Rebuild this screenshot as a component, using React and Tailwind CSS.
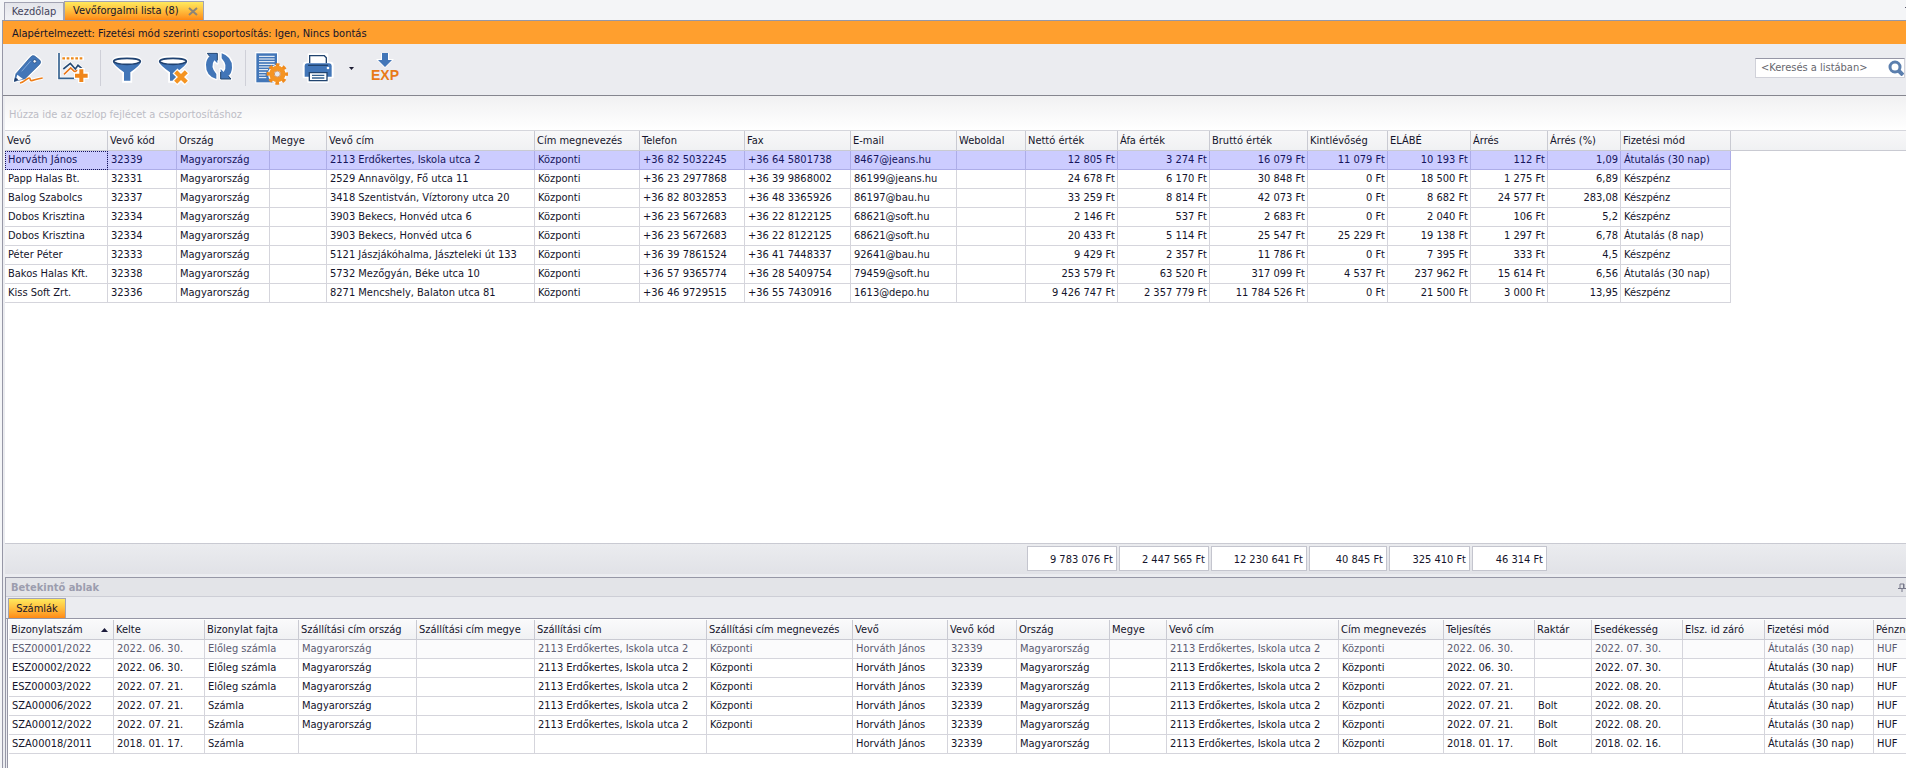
import { useState } from 'react';
import { clsx } from 'clsx';

const customerColumns = [
  { label: 'Vevő', width: 103 },
  { label: 'Vevő kód', width: 69 },
  { label: 'Ország', width: 93 },
  { label: 'Megye', width: 57 },
  { label: 'Vevő cím', width: 208 },
  { label: 'Cím megnevezés', width: 105 },
  { label: 'Telefon', width: 105 },
  { label: 'Fax', width: 106 },
  { label: 'E-mail', width: 106 },
  { label: 'Weboldal', width: 69 },
  { label: 'Nettó érték', width: 92, right: true, total: '9 783 076 Ft' },
  { label: 'Áfa érték', width: 92, right: true, total: '2 447 565 Ft' },
  { label: 'Bruttó érték', width: 98, right: true, total: '12 230 641 Ft' },
  { label: 'Kintlévőség', width: 80, right: true, total: '40 845 Ft' },
  { label: 'ELÁBÉ', width: 83, right: true, total: '325 410 Ft' },
  { label: 'Árrés', width: 77, right: true, total: '46 314 Ft' },
  { label: 'Árrés (%)', width: 73, right: true },
  { label: 'Fizetési mód', width: 110 },
];

const customers = [
  ['Horváth János', '32339', 'Magyarország', '', '2113 Erdőkertes, Iskola utca 2', 'Központi', '+36 82 5032245', '+36 64 5801738', '8467@jeans.hu', '', '12 805 Ft', '3 274 Ft', '16 079 Ft', '11 079 Ft', '10 193 Ft', '112 Ft', '1,09', 'Átutalás (30 nap)'],
  ['Papp Halas Bt.', '32331', 'Magyarország', '', '2529 Annavölgy, Fő utca 11', 'Központi', '+36 23 2977868', '+36 39 9868002', '86199@jeans.hu', '', '24 678 Ft', '6 170 Ft', '30 848 Ft', '0 Ft', '18 500 Ft', '1 275 Ft', '6,89', 'Készpénz'],
  ['Balog Szabolcs', '32337', 'Magyarország', '', '3418 Szentistván, Víztorony utca 20', 'Központi', '+36 82 8032853', '+36 48 3365926', '86197@bau.hu', '', '33 259 Ft', '8 814 Ft', '42 073 Ft', '0 Ft', '8 682 Ft', '24 577 Ft', '283,08', 'Készpénz'],
  ['Dobos Krisztina', '32334', 'Magyarország', '', '3903 Bekecs, Honvéd utca 6', 'Központi', '+36 23 5672683', '+36 22 8122125', '68621@soft.hu', '', '2 146 Ft', '537 Ft', '2 683 Ft', '0 Ft', '2 040 Ft', '106 Ft', '5,2', 'Készpénz'],
  ['Dobos Krisztina', '32334', 'Magyarország', '', '3903 Bekecs, Honvéd utca 6', 'Központi', '+36 23 5672683', '+36 22 8122125', '68621@soft.hu', '', '20 433 Ft', '5 114 Ft', '25 547 Ft', '25 229 Ft', '19 138 Ft', '1 297 Ft', '6,78', 'Átutalás (8 nap)'],
  ['Péter Péter', '32333', 'Magyarország', '', '5121 Jászjákóhalma, Jászteleki út 133', 'Központi', '+36 39 7861524', '+36 41 7448337', '92641@bau.hu', '', '9 429 Ft', '2 357 Ft', '11 786 Ft', '0 Ft', '7 395 Ft', '333 Ft', '4,5', 'Készpénz'],
  ['Bakos Halas Kft.', '32338', 'Magyarország', '', '5732 Mezőgyán, Béke utca 10', 'Központi', '+36 57 9365774', '+36 28 5409754', '79459@soft.hu', '', '253 579 Ft', '63 520 Ft', '317 099 Ft', '4 537 Ft', '237 962 Ft', '15 614 Ft', '6,56', 'Átutalás (30 nap)'],
  ['Kiss Soft Zrt.', '32336', 'Magyarország', '', '8271 Mencshely, Balaton utca 81', 'Központi', '+36 46 9729515', '+36 55 7430916', '1613@depo.hu', '', '9 426 747 Ft', '2 357 779 Ft', '11 784 526 Ft', '0 Ft', '21 500 Ft', '3 000 Ft', '13,95', 'Készpénz'],
];

const invoiceColumns = [
  { label: 'Bizonylatszám', width: 105, sorted: true },
  { label: 'Kelte', width: 91 },
  { label: 'Bizonylat fajta', width: 94 },
  { label: 'Szállítási cím ország', width: 118 },
  { label: 'Szállítási cím megye', width: 118 },
  { label: 'Szállítási cím', width: 172 },
  { label: 'Szállítási cím megnevezés', width: 146 },
  { label: 'Vevő', width: 95 },
  { label: 'Vevő kód', width: 69 },
  { label: 'Ország', width: 93 },
  { label: 'Megye', width: 57 },
  { label: 'Vevő cím', width: 172 },
  { label: 'Cím megnevezés', width: 105 },
  { label: 'Teljesítés', width: 91 },
  { label: 'Raktár', width: 57 },
  { label: 'Esedékesség', width: 91 },
  { label: 'Elsz. id záró', width: 82 },
  { label: 'Fizetési mód', width: 109 },
  { label: 'Pénznem', width: 60 },
];

const address = '2113 Erdőkertes, Iskola utca 2';
const buyer = ['Horváth János', '32339', 'Magyarország', '', address, 'Központi'];
const delivery = ['Magyarország', '', address, 'Központi'];

const invoices = [
  ['ESZ00001/2022', '2022. 06. 30.', 'Előleg számla', ...delivery, ...buyer, '2022. 06. 30.', '', '2022. 07. 30.', '', 'Átutalás (30 nap)', 'HUF'],
  ['ESZ00002/2022', '2022. 06. 30.', 'Előleg számla', ...delivery, ...buyer, '2022. 06. 30.', '', '2022. 07. 30.', '', 'Átutalás (30 nap)', 'HUF'],
  ['ESZ00003/2022', '2022. 07. 21.', 'Előleg számla', ...delivery, ...buyer, '2022. 07. 21.', '', '2022. 08. 20.', '', 'Átutalás (30 nap)', 'HUF'],
  ['SZA00006/2022', '2022. 07. 21.', 'Számla', ...delivery, ...buyer, '2022. 07. 21.', 'Bolt', '2022. 08. 20.', '', 'Átutalás (30 nap)', 'HUF'],
  ['SZA00012/2022', '2022. 07. 21.', 'Számla', ...delivery, ...buyer, '2022. 07. 21.', 'Bolt', '2022. 08. 20.', '', 'Átutalás (30 nap)', 'HUF'],
  ['SZA00018/2011', '2018. 01. 17.', 'Számla', '', '', '', '', ...buyer, '2018. 01. 17.', 'Bolt', '2018. 02. 16.', '', 'Átutalás (30 nap)', 'HUF'],
];

const sum = (columns) => columns.reduce((total, c) => total + c.width, 0);

function Icon({ children }) {
  return <svg className="h-9 w-9" viewBox="0 0 108 108" fill="none" aria-hidden="true">{children}</svg>;
}

function PencilIcon() {
  return (
    <Icon>
      <path d="M30 99c14-2 20-15 28-15 5 0 0 8 6 8 8 0 14-6 34-8" stroke="#fff" strokeWidth="11" />
      <path d="m13 94 5-23 43-49q6-8 13-4l15 12q6 6 0 13L45 86Z" fill="#fff" stroke="#fff" strokeWidth="9" strokeLinejoin="round" />
      <path d="m13 94 5-23 43-49q6-8 13-4l15 12q6 6 0 13L45 86Z" fill="#4276b8" stroke="#2c5a94" strokeWidth="2" />
      <path d="m22 74 17 13-20 5-2-2Z" fill="#fff" />
      <path d="m12 95 3-12q8 1 10 8Z" fill="#1f3f6e" />
      <path d="m35 64 27-31" stroke="#7ea6d8" strokeWidth="3" />
      <circle cx="74" cy="34" r="5" fill="#fff" stroke="#1f3f6e" strokeWidth="2" />
      <path d="M30 99c14-2 20-15 28-15 5 0 0 8 6 8 8 0 14-6 34-8" stroke="#ee7f1a" strokeWidth="5" />
    </Icon>
  );
}

function ChartAddIcon() {
  return (
    <Icon>
      <path d="M9 9v76h52" stroke="#fff" strokeWidth="10" />
      <path d="M9 9v76h50" stroke="#35618f" strokeWidth="5" />
      <path d="M18 25h66" stroke="#fff" strokeWidth="12" />
      <path d="M19 25h64" stroke="#ee8a1c" strokeWidth="7" strokeDasharray="8 5" />
      <path d="m22 57 21-17 15 17 8-11 12 10M24 73l20-19 13 12 6-6" stroke="#fff" strokeWidth="10" />
      <path d="m22 57 21-17 15 17 8-11 12 10" stroke="#274a75" strokeWidth="5" />
      <path d="m24 73 20-19 13 12 6-6" stroke="#e9761a" strokeWidth="5" />
      <path d="M76 54v45M54 77h45" stroke="#fff" strokeWidth="20" />
      <path d="M76 58v38M57 77h38" stroke="#f0861a" strokeWidth="12" />
    </Icon>
  );
}

function FilterIcon({ clear = false }) {
  return (
    <Icon>
      <path d="M13 35q0-14 41-14t41 14q0 6-30 33v26H44V68Q13 41 13 35Z" fill="#fff" stroke="#fff" strokeWidth="9" />
      <path d="M12 37q8 6 42 6t42-6Q93 47 64 67v25H45V67Q16 47 12 37Z" fill="#4276b8" />
      <ellipse cx="54" cy="34" rx="40" ry="9" fill="#fff" stroke="#1f4272" strokeWidth="5" />
      {clear && (
        <>
          <path d="m60 63 36 36m0-36L60 99" stroke="#fff" strokeWidth="21" />
          <path d="m62 65 32 32m0-32L62 97" stroke="#f59422" strokeWidth="13" />
        </>
      )}
    </Icon>
  );
}

function RefreshIcon() {
  return (
    <Icon>
      <g stroke="#fff" strokeWidth="8" strokeLinejoin="round">
        <path d="M46 87Q14 77 15 44q1-17 11-25l-7-9h30v30l-9-9Q26 50 46 72Z" fill="#fff" />
        <path d="M62 10q32 10 31 43-1 17-11 25l8 9H59V57l9 9q14-19-6-41Z" fill="#fff" />
      </g>
      <path d="M46 87Q14 77 15 44q1-17 11-25l-7-9h30v30l-9-9Q26 50 46 72Z" fill="#4276b8" />
      <path d="M62 10q32 10 31 43-1 17-11 25l8 9H59V57l9 9q14-19-6-41Z" fill="#4276b8" />
      <path d="M26 19 19 10h30v21M82 78l8 9H59V66" stroke="#21446f" strokeWidth="3" />
    </Icon>
  );
}

function ReportSettingsIcon() {
  return (
    <Icon>
      <path d="M4 6h68v94H4Z" fill="#fff" />
      <path d="M7 10h62v87H7Z" fill="#4276b8" />
      <path d="M15 19h47M15 27h47M15 35h47M15 43h47M15 51h32M15 59h27M15 67h22M15 75h20M15 83h22" stroke="#fff" strokeWidth="3" />
      <circle cx="70" cy="72" r="28" fill="#fff" />
      <circle cx="70" cy="72" r="27" stroke="#f08a1c" strokeWidth="10" strokeDasharray="11 10.2" strokeDashoffset="5.5" />
      <circle cx="70" cy="72" r="17" stroke="#f59422" strokeWidth="15" />
      <circle cx="70" cy="72" r="9" fill="#e4e8ef" stroke="#c9691a" strokeWidth="2" />
    </Icon>
  );
}

function PrinterIcon() {
  return (
    <Icon>
      <path d="M26 13h56v25h10q6 0 6 8v36H83v14H25V82H11V46q0-8 6-8h9Z" fill="#fff" stroke="#fff" strokeWidth="6" strokeLinejoin="round" />
      <path d="M29 40V17h44l6 6v17" fill="#fff" stroke="#21446f" strokeWidth="4" />
      <path d="M22 40h64q9 0 9 9v31H14V49q0-9 8-9Z" fill="#4276b8" />
      <path d="M24 46h60" stroke="#21446f" strokeWidth="4" />
      <circle cx="84" cy="54" r="4" fill="#fff" />
      <path d="M28 68h53v24H28Z" fill="#fff" stroke="#21446f" strokeWidth="4" />
      <path d="M36 76h37M36 84h37" stroke="#35618f" strokeWidth="4" />
    </Icon>
  );
}

function ExportIcon() {
  return (
    <span className="flex h-9 flex-col items-center">
      <svg className="mt-[3px] h-[15px] w-[18px]" viewBox="0 0 18 15" aria-hidden="true">
        <path d="M5 0h8v6h5l-9 9-9-9h5Z" fill="#fff" />
        <path d="M6 0h6v7h4l-7 7-7-7h4Z" fill="#4276b8" />
      </svg>
      <span className="font-['Liberation_Sans',sans-serif] text-[14px] leading-[14px] font-bold text-[#e87a18]">EXP</span>
    </span>
  );
}

function ToolButton({ label, children }) {
  return (
    <button type="button" aria-label={label} className="flex w-[46px] items-center justify-center">
      {children}
    </button>
  );
}

function Separator() {
  return <div className="mx-[3px] h-9 w-px bg-[#cfd0d8]" />;
}

function DataGrid({ columns, rows, selected, focused, onSelect }) {
  return (
    <table className="table-fixed border-separate border-spacing-0" style={{ width: sum(columns) }}>
      <colgroup>
        {columns.map((c) => <col key={c.label} style={{ width: c.width }} />)}
      </colgroup>
      <thead>
        <tr className="h-5">
          {columns.map((c) => (
            <th key={c.label} className="border-r border-b border-[#c9cad2] p-0 pl-[2px] text-left font-normal whitespace-nowrap">
              <span className="flex items-center justify-between">
                {c.label}
                {c.sorted && <svg className="mr-[5px] h-1 w-[7px]" viewBox="0 0 7 4" aria-label="növekvő"><path d="M0 4 3.5 0 7 4Z" fill="#1c1c3c" /></svg>}
              </span>
            </th>
          ))}
        </tr>
      </thead>
      <tbody>
        {rows.map((row, r) => (
          <tr
            key={r}
            onClick={() => onSelect?.(r)}
            className={clsx('h-[19px]', r === selected && 'bg-[#ccccff] text-[#15155c]', r === focused && 'bg-[#fbfbfc] text-[#5a5a70]', r !== selected && r !== focused && 'bg-white')}
          >
            {row.map((value, i) => (
              <td
                key={i}
                className={clsx(
                  'border-r border-b p-0 whitespace-nowrap',
                  r === selected ? 'border-[#adade8]' : 'border-[#d5d5dc]',
                  columns[i].right ? 'pr-[2px] text-right' : 'pl-[3px]',
                  r === selected && i === 0 && 'outline outline-dotted outline-[#15155c] -outline-offset-1',
                )}
              >
                {value}
              </td>
            ))}
          </tr>
        ))}
      </tbody>
    </table>
  );
}

export default function App() {
  const [selected, setSelected] = useState(0);
  const totals = customerColumns.filter((c) => c.total);
  const lead = customerColumns.slice(0, customerColumns.findIndex((c) => c.total));

  return (
    <div className="flex h-screen flex-col overflow-hidden bg-[#f4f5f7] pl-[2px] font-['DejaVu_Sans_Condensed','Noto_Sans',sans-serif] text-[11px] leading-[18px] text-[#14142b]">
      <nav className="flex h-5 items-end justify-between pl-[2px]">
        <div className="flex items-end">
          <a href="#kezdolap" className="h-[18px] w-[60px] border border-b-0 border-[#a2a3b2] bg-gradient-to-b from-[#e4e5ea] to-[#f1f2f5] text-center text-[#44445c]">Kezdőlap</a>
          <div className="flex h-[19px] w-[140px] items-center justify-between border border-b-0 border-[#a2a3b2] bg-gradient-to-b from-[#ffe95c] via-[#ffbd3c] to-[#ff8a14] pr-[5px] pl-2">
            <a href="#vevoforgalmi-lista">Vevőforgalmi lista (8)</a>
            <button type="button" aria-label="Bezárás">
              <svg className="h-[9px] w-[10px]" viewBox="0 0 10 9" aria-hidden="true"><path d="m1 1 8 7m0-7L1 8" stroke="#8d8578" strokeWidth="2" /></svg>
            </button>
          </div>
        </div>
        <span className="mb-3 h-px w-px bg-[#55556a]" />
      </nav>

      <main className="flex min-h-0 flex-1 flex-col border-t border-l border-[#9697a6] bg-[#ebecf0]">
        <div className="h-[23px] bg-[#ff9f2e] pl-[9px] leading-[26px]">Alapértelmezett: Fizetési mód szerinti csoportosítás: Igen, Nincs bontás</div>

        <div className="flex h-[52px] items-center justify-between border-b border-[#85868f] pr-px pb-[3px]">
          <div className="flex h-full items-center pl-[2px]">
            <ToolButton label="Szerkesztés"><PencilIcon /></ToolButton>
            <ToolButton label="Kimutatás hozzáadása"><ChartAddIcon /></ToolButton>
            <Separator />
            <ToolButton label="Szűrés"><FilterIcon /></ToolButton>
            <ToolButton label="Szűrés törlése"><FilterIcon clear /></ToolButton>
            <ToolButton label="Frissítés"><RefreshIcon /></ToolButton>
            <Separator />
            <ToolButton label="Lista beállításai"><ReportSettingsIcon /></ToolButton>
            <ToolButton label="Nyomtatás"><PrinterIcon /></ToolButton>
            <button type="button" aria-label="Nyomtatási lehetőségek" className="flex h-9 w-5 items-center justify-center">
              <svg className="h-[3px] w-[5px]" viewBox="0 0 5 3" aria-hidden="true"><path d="M0 0h5L2.5 3Z" fill="#1c1c33" /></svg>
            </button>
            <button type="button" className="flex w-12 items-center justify-center"><ExportIcon /></button>
          </div>
          <form className="flex h-5 w-[150px] items-center border border-[#d0d1d9] border-t-[#9697a6] bg-white" onSubmit={(e) => e.preventDefault()}>
            <input aria-label="Keresés a listában" placeholder="<Keresés a listában>" className="min-w-0 flex-1 pl-[5px] outline-none placeholder:text-[#66666e]" />
            <button type="submit" aria-label="Keresés">
              <svg className="h-4 w-4" viewBox="0 0 16 16" fill="none" aria-hidden="true">
                <circle cx="7" cy="7" r="5" stroke="#5b7fae" strokeWidth="3" />
                <path d="m10 10 5 5" stroke="#5b7fae" strokeWidth="4" />
              </svg>
            </button>
          </form>
        </div>

        <section className="flex min-h-0 flex-1 flex-col pl-[2px]">
          <div className="h-[34px] bg-gradient-to-b from-[#f1f1f2] to-white pl-1 leading-[38px] text-[#bdbdc6]">Húzza ide az oszlop fejlécet a csoportosításhoz</div>
          <div className="min-h-0 flex-1 overflow-hidden border-t border-[#d5d6dc] bg-[linear-gradient(#f8f8f9,#f0f1f3_19px,#c9cad2_19px,#c9cad2_20px,white_20px)]">
            <DataGrid columns={customerColumns} rows={customers} selected={selected} onSelect={setSelected} />
          </div>
          <div className="flex h-[31px] items-start overflow-hidden border-t border-[#c9cad2] bg-gradient-to-b from-[#ebecef] to-[#e1e2e7] pt-[2px]">
            <div className="shrink-0" style={{ width: sum(lead) }} />
            {totals.map((c) => (
              <div key={c.label} className="shrink-0 px-px" style={{ width: c.width }}>
                <div className="h-[25px] border border-[#c4c5ce] bg-white pr-[3px] text-right leading-[25px]">{c.total}</div>
              </div>
            ))}
          </div>
        </section>

        <section className="mt-[3px] ml-[2px] flex h-[191px] flex-col border-t border-l border-[#9697a6]">
          <div className="flex h-[19px] items-center justify-between border-b border-[#cdced6] bg-[#e3e4e8] pt-px pl-[5px]">
            <h2 className="font-bold text-[#9c9dae]">Betekintő ablak</h2>
            <button type="button" aria-label="Rögzítés">
              <svg className="h-[9px] w-2" viewBox="0 0 8 9" fill="none" aria-hidden="true">
                <path d="M2 5V1h4v4M0 5.500h8M4 6v3" stroke="#77788a" />
                <path d="M5 1h1v4H5Z" fill="#77788a" />
              </svg>
            </button>
          </div>
          <div className="flex h-[22px] items-end border-b border-[#9697a6] pl-[2px]">
            <button type="button" className="h-[20px] w-[58px] border border-b-0 border-[#a2a3b2] bg-gradient-to-b from-[#ffe95c] via-[#ffbd3c] to-[#ff8a14] pt-px">Számlák</button>
          </div>
          <div className="ml-px flex-1 overflow-hidden border-l border-[#9697a6] bg-white pt-px pl-px">
            <div className="h-full overflow-hidden bg-[linear-gradient(#fafafb,#f0f1f3_19px,#c9cad2_19px,#c9cad2_20px,white_20px)]">
              <DataGrid columns={invoiceColumns} rows={invoices} focused={0} />
            </div>
          </div>
        </section>
      </main>
    </div>
  );
}
